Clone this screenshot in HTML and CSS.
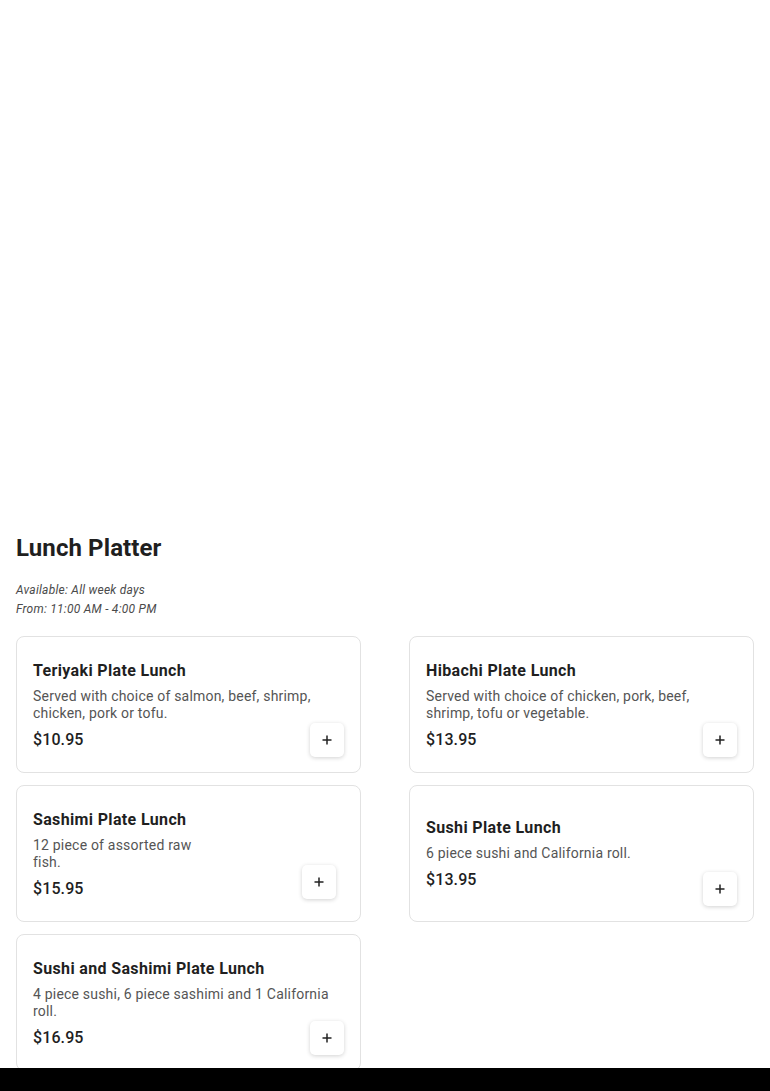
FILE: index.html
```html
<!doctype html>
<html>

<head>
  <meta charset="utf-8">
  <title>Lunch Platter</title>
  <link rel="stylesheet" href="styles.css">
</head>

<body>
  <div class="hero"></div>

  <div class="menu-section">
    <h1>Lunch Platter</h1>
    <div class="hours">
      <p>Available: All week days</p>
      <p>From: 11:00 AM - 4:00 PM</p>
    </div>

    <div class="menu-grid">
      <div class="item-card">
        <h3>Teriyaki Plate Lunch</h3>
        <p class="desc">Served with choice of salmon, beef, shrimp, chicken, pork or tofu.</p>
        <div class="price">$10.95</div>
        <button class="add-btn"><svg width="12" height="12" viewBox="0 0 12 12"><path d="M6 1.5v9M1.5 6h9" stroke="#222" stroke-width="1.5"/></svg></button>
      </div>

      <div class="item-card">
        <h3>Hibachi Plate Lunch</h3>
        <p class="desc">Served with choice of chicken, pork, beef, shrimp, tofu or vegetable.</p>
        <div class="price">$13.95</div>
        <button class="add-btn"><svg width="12" height="12" viewBox="0 0 12 12"><path d="M6 1.5v9M1.5 6h9" stroke="#222" stroke-width="1.5"/></svg></button>
      </div>

      <div class="item-card">
        <h3>Sashimi Plate Lunch</h3>
        <p class="desc narrow">12 piece of assorted raw fish.</p>
        <div class="price">$15.95</div>
        <button class="add-btn inset"><svg width="12" height="12" viewBox="0 0 12 12"><path d="M6 1.5v9M1.5 6h9" stroke="#222" stroke-width="1.5"/></svg></button>
      </div>

      <div class="item-card">
        <h3>Sushi Plate Lunch</h3>
        <p class="desc">6 piece sushi and California roll.</p>
        <div class="price">$13.95</div>
        <button class="add-btn"><svg width="12" height="12" viewBox="0 0 12 12"><path d="M6 1.5v9M1.5 6h9" stroke="#222" stroke-width="1.5"/></svg></button>
      </div>

      <div class="item-card">
        <h3>Sushi and Sashimi Plate Lunch</h3>
        <p class="desc">4 piece sushi, 6 piece sashimi and 1 California roll.</p>
        <div class="price">$16.95</div>
        <button class="add-btn"><svg width="12" height="12" viewBox="0 0 12 12"><path d="M6 1.5v9M1.5 6h9" stroke="#222" stroke-width="1.5"/></svg></button>
      </div>
    </div>
  </div>

  <div class="bottom-bar"></div>
</body>

</html>
```

FILE: styles.css
```css
body {
  margin: 0;
  background-color: #fff;
  font-family: Roboto, "Liberation Sans", sans-serif;
  color: #1f1f1f;
}

.hero {
  height: 520px;
}

.menu-section {
  padding: 0 16px 40px;
}

h1 {
  margin: 12px 0 0;
  font-size: 24px;
  line-height: 32px;
  font-weight: 700;
  letter-spacing: 0.1px;
}

.hours {
  margin-top: 17px;
}

.hours p {
  margin: 0;
  font-size: 12px;
  line-height: 19px;
  font-style: italic;
  letter-spacing: 0.25px;
  color: #4a4a4a;
}

.menu-grid {
  margin-top: 17px;
  display: grid;
  grid-template-columns: 1fr 1fr;
  column-gap: 48px;
  row-gap: 12px;
}

.item-card {
  position: relative;
  display: flex;
  flex-direction: column;
  justify-content: center;
  height: 137px;
  box-sizing: border-box;
  border: 1px solid #e2e2e2;
  border-radius: 8px;
  padding: 1px 16px 0;
}

.item-card h3 {
  margin: 0;
  font-size: 16px;
  line-height: 24px;
  font-weight: 700;
  letter-spacing: 0.35px;
  color: #1f1f1f;
}

.desc {
  margin: 5px 0 0;
  font-size: 14px;
  line-height: 17px;
  letter-spacing: 0.2px;
  color: #555;
}

.desc.narrow {
  max-width: 175px;
}

.price {
  margin-top: 6px;
  font-size: 16px;
  line-height: 24px;
  font-weight: 500;
  letter-spacing: 0.1px;
}

.add-btn {
  position: absolute;
  right: 16px;
  bottom: 15px;
  width: 34px;
  height: 34px;
  padding: 0;
  border: none;
  border-radius: 5px;
  background: #fff;
  box-shadow: 0 1px 4px rgba(0, 0, 0, 0.18);
  display: flex;
  align-items: center;
  justify-content: center;
}

.add-btn.inset {
  right: 24px;
  bottom: 22px;
}

.bottom-bar {
  position: fixed;
  left: 0;
  right: 0;
  bottom: 0;
  height: 23px;
  background: #000;
}
```
